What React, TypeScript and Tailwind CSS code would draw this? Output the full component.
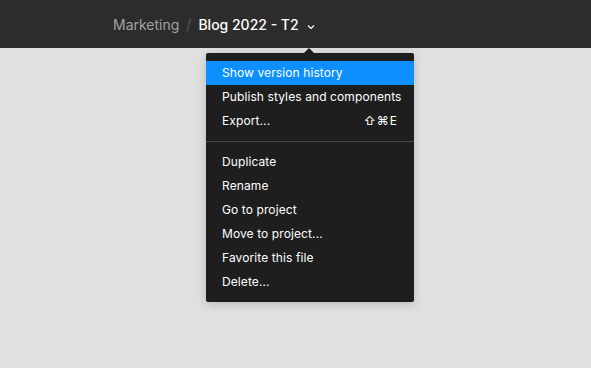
const items = ['Duplicate', 'Rename', 'Go to project', 'Move to project...', 'Favorite this file', 'Delete...'];

function Row({ label, active, shortcut }: { label: string; active?: boolean; shortcut?: string }) {
  return (
    <div
      className={`flex h-6 items-center justify-between whitespace-nowrap pl-4 pr-4 text-[12px] leading-none tracking-[0.1px] text-white ${
        active ? 'bg-[#0d8fff]' : ''
      }`}
    >
      <span>{label}</span>
      {shortcut && <span className="tracking-[1px]">{shortcut}</span>}
    </div>
  );
}

export default function App() {
  return (
    <div className="flex h-[368px] w-[591px] flex-col bg-[#e0e0e0] font-['Inter',sans-serif]">
      <header className="flex h-12 shrink-0 items-center bg-[#2c2c2c] pl-[113px] text-[14px]">
        <span className="text-[#a3a3a3]">Marketing</span>
        <span className="mx-[7px] text-[#5a5a5a]">/</span>
        <span className="font-medium text-white">Blog 2022 - T2</span>
        <svg className="ml-[8px] mt-[6px]" width="8" height="6" viewBox="0 0 8 6" fill="none">
          <path d="M1 1.5 4 4.5 7 1.5" stroke="#ffffff" strokeWidth="1.2" />
        </svg>
      </header>

      <div className="relative ml-[206px] mt-[5px] w-[208px]">
        <div className="absolute -top-[5px] left-[98px] h-0 w-0 border-x-[5px] border-b-[5px] border-x-transparent border-b-[#1e1e1e]" />
        <div className="rounded-[2px] bg-[#1e1e1e] py-2 shadow-[0_2px_10px_rgba(0,0,0,0.18)]">
          <Row label="Show version history" active />
          <Row label="Publish styles and components" />
          <Row label="Export..." shortcut="⇧⌘E" />
          <div className="my-2 h-px bg-[#464646]" />
          {items.map((i) => (
            <Row key={i} label={i} />
          ))}
        </div>
      </div>
    </div>
  );
}
